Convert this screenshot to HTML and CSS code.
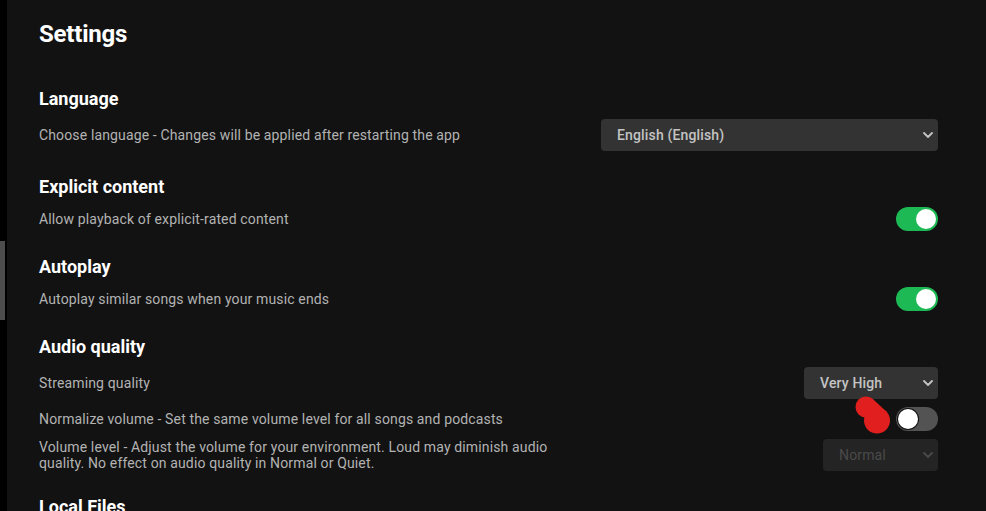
FILE: index.html
```html
<!DOCTYPE html>
<html lang="en">
<head>
<meta charset="utf-8">
<title>Settings</title>
<link rel="stylesheet" href="styles.css">
</head>
<body>
<div class="app">
  <aside class="rail"><div class="thumb"></div></aside>
  <main class="settings">
    <h1 class="title">Settings</h1>

    <section class="section">
      <h2 class="heading">Language</h2>
      <div class="row row-select">
        <span class="label">Choose language - Changes will be applied after restarting the app</span>
        <div class="select select-lang">
          <span class="select-text">English (English)</span>
          <svg class="chevron" viewBox="0 0 10 6" width="10" height="6"><path d="M1 1l4 4 4-4" fill="none" stroke="currentColor" stroke-width="1.8" stroke-linecap="round" stroke-linejoin="round"/></svg>
        </div>
      </div>
    </section>

    <section class="section">
      <h2 class="heading">Explicit content</h2>
      <div class="row row-toggle">
        <span class="label">Allow playback of explicit-rated content</span>
        <div class="toggle on"><span class="knob"></span></div>
      </div>
    </section>

    <section class="section">
      <h2 class="heading">Autoplay</h2>
      <div class="row row-toggle">
        <span class="label">Autoplay similar songs when your music ends</span>
        <div class="toggle on"><span class="knob"></span></div>
      </div>
    </section>

    <section class="section">
      <h2 class="heading">Audio quality</h2>
      <div class="row row-select">
        <span class="label">Streaming quality</span>
        <div class="select select-quality">
          <span class="select-text">Very High</span>
          <svg class="chevron" viewBox="0 0 10 6" width="10" height="6"><path d="M1 1l4 4 4-4" fill="none" stroke="currentColor" stroke-width="1.8" stroke-linecap="round" stroke-linejoin="round"/></svg>
        </div>
      </div>
      <div class="row row-toggle">
        <span class="label">Normalize volume - Set the same volume level for all songs and podcasts</span>
        <div class="toggle-wrap">
          <svg class="scribble" viewBox="0 0 40 40" width="40" height="40"><circle cx="12" cy="12" r="10.5" fill="#e21f1f"/><circle cx="23" cy="25.5" r="13" fill="#e21f1f"/><path d="M20.15 5.36 L33.09 17.28 L23 25.5 L12 12 Z" fill="#e21f1f"/></svg>
          <div class="toggle off"><span class="knob"></span></div>
        </div>
      </div>
      <div class="row row-select">
        <span class="label label-wrap">Volume level - Adjust the volume for your environment. Loud may diminish audio quality. No effect on audio quality in Normal or Quiet.</span>
        <div class="select select-level disabled">
          <span class="select-text">Normal</span>
          <svg class="chevron" viewBox="0 0 10 6" width="10" height="6"><path d="M1 1l4 4 4-4" fill="none" stroke="currentColor" stroke-width="1.8" stroke-linecap="round" stroke-linejoin="round"/></svg>
        </div>
      </div>
    </section>

    <section class="section">
      <h2 class="heading">Local Files</h2>
    </section>
  </main>
</div>
</body>
</html>
```

FILE: styles.css
```css
* { box-sizing: border-box; }

html, body {
  margin: 0;
  padding: 0;
  height: 100%;
  overflow: hidden;
  background: #121212;
}

body {
  font-family: Roboto, "Liberation Sans", Arial, sans-serif;
  color: #b3b3b3;
}

.app {
  display: flex;
  min-height: 100%;
}

.rail {
  width: 7px;
  flex: 0 0 7px;
  background: #000;
  padding-top: 241px;
}

.thumb {
  width: 5px;
  height: 79px;
  background: #4d4d4d;
}

.settings {
  flex: 1;
  padding: 18px 48px 0 32px;
  display: flex;
  flex-direction: column;
  gap: 20px;
}

.title {
  margin: 0 0 17px;
  font-size: 24px;
  line-height: 32px;
  font-weight: 700;
  color: #fff;
  letter-spacing: -0.2px;
}

.section {
  display: flex;
  flex-direction: column;
}

.heading {
  margin: 0 0 4px;
  font-size: 18px;
  line-height: 24px;
  font-weight: 700;
  color: #fff;
}

.row {
  display: flex;
  align-items: center;
  justify-content: space-between;
}

.row-select { min-height: 40px; }
.row-toggle { min-height: 32px; }

.label {
  font-size: 14px;
  line-height: 16px;
  color: #b3b3b3;
  letter-spacing: 0.14px;
}

.label-wrap { max-width: 520px; }

.select {
  position: relative;
  display: flex;
  align-items: center;
  height: 32px;
  padding: 0 32px 0 16px;
  background: #333;
  border-radius: 4px;
  color: #c4c4c4;
  font-size: 14px;
  font-weight: 500;
  letter-spacing: 0.15px;
}

.select-lang { width: 337px; }
.select-quality { width: 134px; }
.select-level { width: 115px; }

.select.disabled {
  background: #242424;
  color: #4a4a4a;
  font-weight: 400;
}

.chevron {
  position: absolute;
  right: 5px;
  top: 13px;
  color: #c4c4c4;
}

.select.disabled .chevron { color: #4a4a4a; }

.toggle-wrap {
  position: relative;
  display: flex;
}

.scribble {
  position: absolute;
  left: -42px;
  top: -12px;
}

.toggle {
  display: flex;
  align-items: center;
  width: 42px;
  height: 24px;
  padding: 2px;
  border-radius: 12px;
}

.toggle.on {
  background: #1db954;
  justify-content: flex-end;
}

.toggle.off {
  background: #535353;
  justify-content: flex-start;
}

.knob {
  width: 20px;
  height: 20px;
  border-radius: 50%;
  background: #fff;
}

.toggle.off .knob {
  box-shadow: 0 0 0 1px #111;
}
```
